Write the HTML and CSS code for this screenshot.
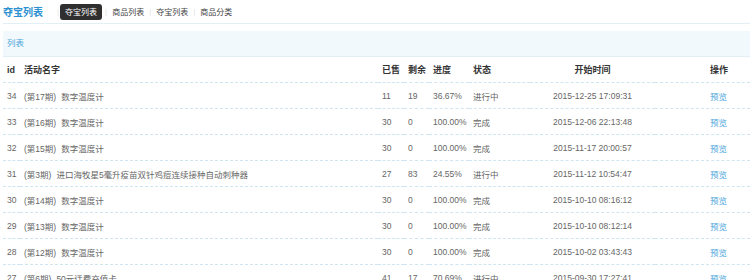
FILE: index.html
```html
<!DOCTYPE html>
<html lang="zh-CN">
<head>
    <meta charset="UTF-8">
    <title>夺宝列表</title>
    <link rel="stylesheet" href="styles.css">
</head>
<body>
    <div class="page">
        <div class="topbar">
            <div class="brand">夺宝列表</div>
            <div class="nav">
                <span class="sep">|</span>
                <a class="nav-item active">夺宝列表</a>
                <span class="sep">|</span>
                <a class="nav-item">商品列表</a>
                <span class="sep">|</span>
                <a class="nav-item">夺宝列表</a>
                <span class="sep">|</span>
                <a class="nav-item">商品分类</a>
            </div>
        </div>

        <div class="panel-title">列表</div>

        <table class="list">
            <colgroup>
                <col class="c-id"><col class="c-name"><col class="c-sold"><col class="c-left">
                <col class="c-prog"><col class="c-state"><col class="c-time"><col class="c-op">
            </colgroup>
            <thead>
                <tr>
                    <th>id</th><th>活动名字</th><th>已售</th><th>剩余</th>
                    <th>进度</th><th>状态</th><th class="time">开始时间</th><th class="op">操作</th>
                </tr>
            </thead>
            <tbody>
                <tr><td>34</td><td><span class="period">(第17期)</span>数字温度计</td><td>11</td><td>19</td><td>36.67%</td><td>进行中</td><td class="time">2015-12-25 17:09:31</td><td class="op"><a>预览</a></td></tr>
                <tr><td>33</td><td><span class="period">(第16期)</span>数字温度计</td><td>30</td><td>0</td><td>100.00%</td><td>完成</td><td class="time">2015-12-06 22:13:48</td><td class="op"><a>预览</a></td></tr>
                <tr><td>32</td><td><span class="period">(第15期)</span>数字温度计</td><td>30</td><td>0</td><td>100.00%</td><td>完成</td><td class="time">2015-11-17 20:00:57</td><td class="op"><a>预览</a></td></tr>
                <tr><td>31</td><td><span class="period">(第3期)</span>进口海牧星5毫升疫苗双针鸡痘连续接种自动刺种器</td><td>27</td><td>83</td><td>24.55%</td><td>进行中</td><td class="time">2015-11-12 10:54:47</td><td class="op"><a>预览</a></td></tr>
                <tr><td>30</td><td><span class="period">(第14期)</span>数字温度计</td><td>30</td><td>0</td><td>100.00%</td><td>完成</td><td class="time">2015-10-10 08:16:12</td><td class="op"><a>预览</a></td></tr>
                <tr><td>29</td><td><span class="period">(第13期)</span>数字温度计</td><td>30</td><td>0</td><td>100.00%</td><td>完成</td><td class="time">2015-10-10 08:12:14</td><td class="op"><a>预览</a></td></tr>
                <tr><td>28</td><td><span class="period">(第12期)</span>数字温度计</td><td>30</td><td>0</td><td>100.00%</td><td>完成</td><td class="time">2015-10-02 03:43:43</td><td class="op"><a>预览</a></td></tr>
                <tr><td>27</td><td><span class="period">(第6期)</span>50元话费充值卡</td><td>41</td><td>17</td><td>70.69%</td><td>进行中</td><td class="time">2015-09-30 17:27:41</td><td class="op"><a>预览</a></td></tr>
            </tbody>
        </table>
    </div>
</body>
</html>
```

FILE: styles.css
```css
:root {
    --blue: #2b8fd0;
    --blue-soft: #4ba6da;
    --text: #666;
    --text-dark: #333;
    --line: #e3eff7;
    --dash: #cfe6f2;
}

body {
    margin: 0;
    background: #fff;
    font-family: 'Liberation Sans', Arial, 'Noto Sans CJK SC', sans-serif;
    font-size: 8.5px;
    color: var(--text);
}

.page {
    width: 747px;
    padding-left: 3px;
}

.topbar {
    height: 23px;
    display: flex;
    align-items: center;
    border-bottom: 1px solid var(--line);
}

.brand {
    font-size: 10px;
    font-weight: bold;
    color: var(--blue);
    margin-right: 9px;
}

.nav {
    display: flex;
    align-items: center;
    font-size: 8px;
}

.sep {
    color: #e2e2e2;
    font-size: 8px;
    margin: 0 5px;
}

.nav-item {
    color: #444;
}

.nav-item.active {
    background: #2f2f2f;
    color: #fff;
    padding: 2px 5px 3px;
    border-radius: 3px;
    margin: 0 -2px 0 -4px;
}

.panel-title {
    margin-top: 7px;
    height: 25px;
    line-height: 25px;
    padding-left: 4px;
    background: #f2f9fd;
    border-bottom: 1px solid var(--line);
    color: var(--blue-soft);
}

.list {
    width: 747px;
    border-collapse: collapse;
    table-layout: fixed;
}

.c-id { width: 17px; }
.c-name { width: 358px; }
.c-sold { width: 26px; }
.c-left { width: 25px; }
.c-prog { width: 40px; }
.c-state { width: 61px; }
.c-time { width: 125px; }
.c-op { width: 95px; }

.list th,
.list td {
    height: 25px;
    padding: 0 0 0 4px;
    text-align: left;
    white-space: nowrap;
    border-bottom: 1px dashed var(--dash);
}

.list th {
    font-size: 9px;
    color: var(--text-dark);
}

.period {
    margin-right: 5px;
}

.list .time {
    text-align: center;
    padding-left: 0;
}

.list .op {
    padding-left: 55px;
}

.list td a {
    color: var(--blue-soft);
}
```
